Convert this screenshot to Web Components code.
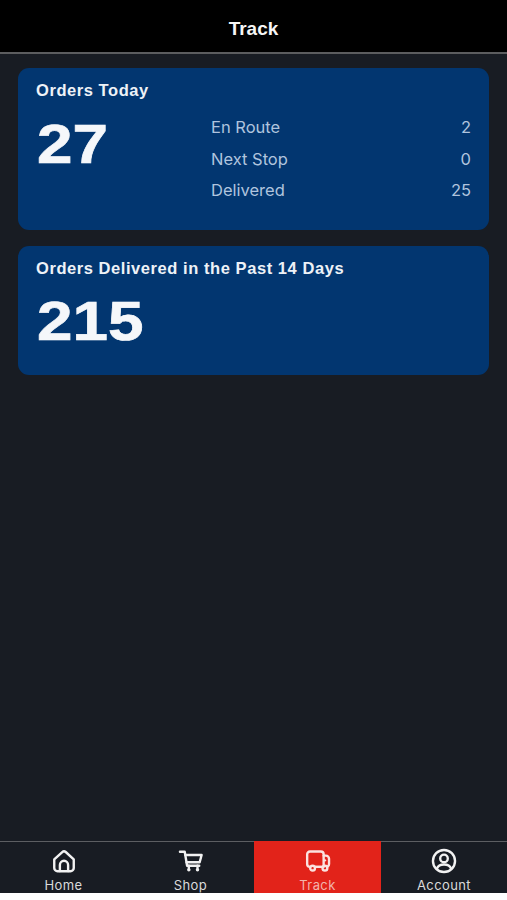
<!DOCTYPE html>
<html lang="en">
<head>
<meta charset="utf-8">
<title>Track</title>
<style>
    html, body { margin: 0; height: 100%; background: #181c23; }
</style>
</head>
<body>
<track-screen>
    <track-header slot="header">Track</track-header>
    <stat-card title="Orders Today" value="27">
        <stat-row label="En Route" value="2"></stat-row>
        <stat-row label="Next Stop" value="0"></stat-row>
        <stat-row label="Delivered" value="25"></stat-row>
    </stat-card>
    <stat-card title="Orders Delivered in the Past 14 Days" value="215" compact></stat-card>
    <tab-bar slot="nav">
        <tab-item label="Home" icon="home"></tab-item>
        <tab-item label="Shop" icon="shop"></tab-item>
        <tab-item label="Track" icon="track" active></tab-item>
        <tab-item label="Account" icon="account"></tab-item>
    </tab-bar>
</track-screen>

<script>
(function() {
    'use strict';

    const FONT = '"Liberation Sans", Arial, sans-serif';

    const ICONS = {
        home: '<path d="M3 10.6 10.4 3.7a2.4 2.4 0 0 1 3.2 0L21 10.6V18.4a3 3 0 0 1-3 3H6a3 3 0 0 1-3-3z"/><path d="M8.2 21.2v-5.6a3.8 3.8 0 0 1 7.6 0v5.6"/>',
        shop: '<path d="M1.8 3.4h4.4l2.2 13h11.2"/><path d="M6.8 6.4h15l-1.8 6.8H7.9"/><path d="M10 16.4v2M18 16.4v2"/><circle cx="10" cy="20" r="1.6" fill="currentColor" stroke="none"/><circle cx="18" cy="20" r="1.6" fill="currentColor" stroke="none"/>',
        track: '<path d="M4.8 17.4H4.6A2.6 2.6 0 0 1 2 14.8V5.8a2.6 2.6 0 0 1 2.6-2.6h10a2.6 2.6 0 0 1 2.6 2.6v11.6H9.4"/><path d="M17.2 7h2a3 3 0 0 1 3 3v4.8a2.6 2.6 0 0 1-1.4 2.4"/><circle cx="18.4" cy="11.4" r="1.1" fill="currentColor" stroke="none"/><circle cx="7" cy="18.6" r="2.2"/><circle cx="18.4" cy="18.6" r="2.2"/><path d="M9.4 17.4h6.8"/>',
        account: '<circle cx="12" cy="12" r="10.2"/><circle cx="12" cy="9.6" r="3.5"/><path d="M5.6 18.8c.8-2.4 3-3.6 6.4-3.6s5.6 1.2 6.4 3.6"/>'
    };

    class TrackScreen extends HTMLElement {
        constructor() {
            super();
            this.attachShadow({ mode: 'open' });
            this.shadowRoot.innerHTML = `
                <style>
                    :host {
                        display: flex;
                        flex-direction: column;
                        height: 900px;
                        background: #181c23;
                        font-family: ${FONT};
                        color: #fff;
                    }
                    main {
                        flex: 1;
                        display: flex;
                        flex-direction: column;
                        gap: 16px;
                        padding: 14px 18px;
                    }
                    footer {
                        height: 7px;
                        background: #fff;
                    }
                </style>
                <slot name="header"></slot>
                <main><slot></slot></main>
                <slot name="nav"></slot>
                <footer></footer>
            `;
        }
    }

    class TrackHeader extends HTMLElement {
        constructor() {
            super();
            this.attachShadow({ mode: 'open' });
            this.shadowRoot.innerHTML = `
                <style>
                    :host {
                        display: flex;
                        align-items: center;
                        justify-content: center;
                        padding-top: 6px;
                        box-sizing: border-box;
                        height: 54px;
                        background: #000;
                        border-bottom: 2px solid #5c5d5f;
                        color: #f6f6f6;
                        font-size: 19px;
                        font-weight: 700;
                    }
                </style>
                <slot></slot>
            `;
        }
    }

    class StatCard extends HTMLElement {
        constructor() {
            super();
            this.attachShadow({ mode: 'open' });
        }

        connectedCallback() {
            const compact = this.hasAttribute('compact');
            this.shadowRoot.innerHTML = `
                <style>
                    :host {
                        display: block;
                        box-sizing: border-box;
                        height: ${compact ? 129 : 162}px;
                        padding: 13px 18px 0;
                        background: #023670;
                        border-radius: 11px;
                    }
                    h2 {
                        margin: 0;
                        font-size: 16.5px;
                        line-height: 19px;
                        font-weight: 700;
                        color: #eef2f7;
                        letter-spacing: 0.56px;
                    }
                    .body {
                        display: grid;
                        grid-template-columns: 175px 1fr;
                        margin-top: ${compact ? 11 : 12}px;
                    }
                    .value {
                        font-size: 56px;
                        line-height: 63px;
                        font-weight: 700;
                        color: #f5f7fa;
                        -webkit-text-stroke: 0.7px #f5f7fa;
                        transform: translateX(1px) scaleX(1.14);
                        transform-origin: left center;
                    }
                    .rows {
                        display: flex;
                        flex-direction: column;
                        gap: 9.5px;
                        padding-top: 4px;
                    }
                </style>
                <h2>${this.getAttribute('title')}</h2>
                <div class="body">
                    <div class="value">${this.getAttribute('value')}</div>
                    <div class="rows"><slot></slot></div>
                </div>
            `;
        }
    }

    class StatRow extends HTMLElement {
        constructor() {
            super();
            this.attachShadow({ mode: 'open' });
        }

        connectedCallback() {
            this.shadowRoot.innerHTML = `
                <style>
                    :host {
                        display: flex;
                        justify-content: space-between;
                        font-family: Inter, ${FONT};
                        font-size: 16.5px;
                        line-height: 22px;
                        color: #b0c4de;
                    }
                </style>
                <span>${this.getAttribute('label')}</span>
                <span>${this.getAttribute('value')}</span>
            `;
        }
    }

    class TabBar extends HTMLElement {
        constructor() {
            super();
            this.attachShadow({ mode: 'open' });
            this.shadowRoot.innerHTML = `
                <style>
                    :host {
                        display: grid;
                        grid-template-columns: 127px 127px 127px 126px;
                        height: 51px;
                        background: #181c23;
                        border-top: 1px solid #5c5e62;
                    }
                </style>
                <slot></slot>
            `;
        }
    }

    class TabItem extends HTMLElement {
        constructor() {
            super();
            this.attachShadow({ mode: 'open' });
        }

        connectedCallback() {
            const icon = ICONS[this.getAttribute('icon')];
            this.shadowRoot.innerHTML = `
                <style>
                    :host {
                        display: flex;
                        flex-direction: column;
                        align-items: center;
                        padding-top: 6px;
                        color: #dadada;
                        font-family: Inter, ${FONT};
                        font-size: 13px;
                        letter-spacing: 0.4px;
                        overflow: hidden;
                    }
                    :host([active]) {
                        background: #e2231a;
                        margin-top: -1px;
                        padding-top: 7px;
                        color: #f3b3ac;
                    }
                    :host([active]) svg { color: #fbe3e0; }
                    svg {
                        width: 26px;
                        height: 26px;
                        fill: none;
                        color: #f2f2f2;
                        stroke: currentColor;
                        stroke-width: 2.2;
                        stroke-linecap: round;
                        stroke-linejoin: round;
                    }
                    span { line-height: 16px; margin-top: 3px; }
                </style>
                <svg viewBox="0 0 24 24">${icon}</svg>
                <span>${this.getAttribute('label')}</span>
            `;
        }
    }

    customElements.define('track-screen', TrackScreen);
    customElements.define('track-header', TrackHeader);
    customElements.define('stat-card', StatCard);
    customElements.define('stat-row', StatRow);
    customElements.define('tab-bar', TabBar);
    customElements.define('tab-item', TabItem);
})();
</script>
</body>
</html>
